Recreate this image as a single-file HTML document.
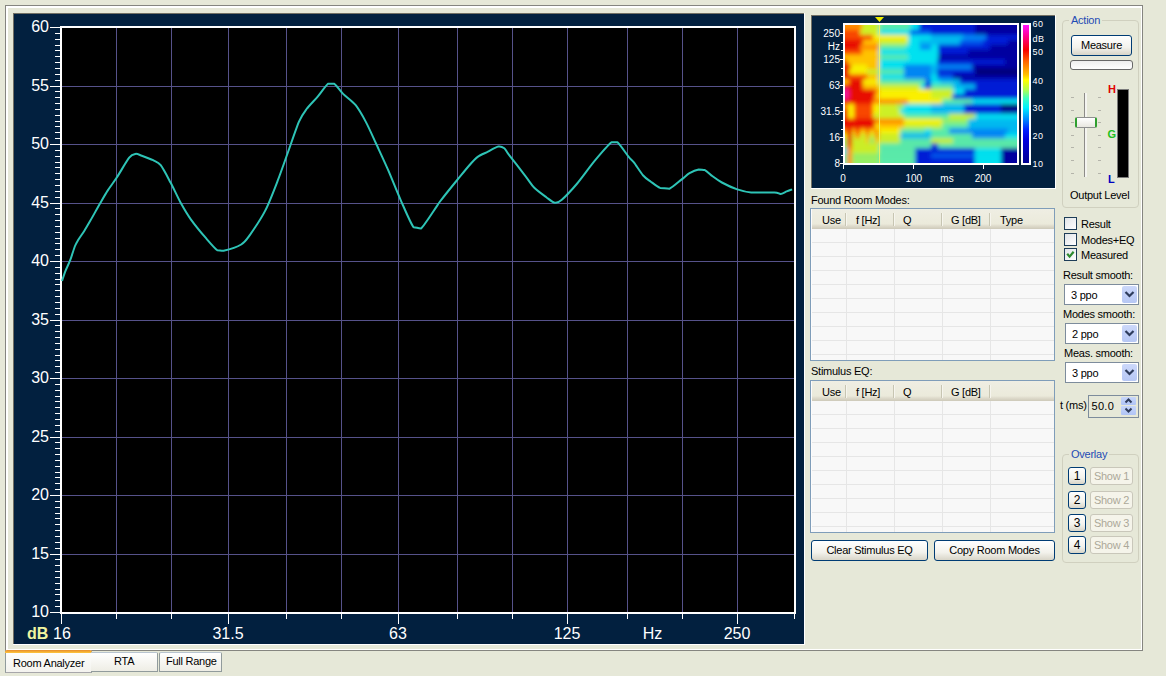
<!DOCTYPE html>
<html><head><meta charset="utf-8"><style>
html,body{margin:0;padding:0;}
body{width:1166px;height:676px;background:#E6E8D8;position:relative;overflow:hidden;font-family:"Liberation Sans", sans-serif;}
.t{position:absolute;white-space:nowrap;font-family:"Liberation Sans", sans-serif;line-height:1;letter-spacing:-0.25px;}
</style></head><body>
<div style="position:absolute;left:5px;top:5px;width:1136px;height:644px;border:1px solid #858580;"></div>
<div style="position:absolute;left:6px;top:6px;width:1133px;height:641px;border-left:2px solid #FFFFFF;border-top:2px solid #FFFFFF;border-right:1px solid #FFFFFF;border-bottom:1px solid #FFFFFF;"></div>
<div style="position:absolute;left:5px;top:650px;width:85px;height:22px;background:linear-gradient(#FFFFFF,#F4F3EE);border-left:1px solid #919B9C;border-right:1px solid #919B9C;border-bottom:1px solid #A7A6AA;"></div>
<div style="position:absolute;left:5px;top:650px;width:87px;height:3px;background:linear-gradient(#E68B2C,#FFC73C);border-radius:2px 2px 0 0"></div>
<div style="position:absolute;left:91px;top:652px;width:66px;height:18px;background:linear-gradient(#FFFFFF,#EEEDE5);border:1px solid #919B9C;border-top:1px solid #B8C4D0;border-left:none;border-radius:0 2px 0 0"></div>
<div style="position:absolute;left:159px;top:652px;width:61px;height:18px;background:linear-gradient(#FFFFFF,#EEEDE5);border:1px solid #919B9C;border-top:1px solid #B8C4D0;border-radius:2px 2px 0 0"></div>
<div class="t" style="left:13px;top:658px;font-size:11px">Room Analyzer</div>
<div class="t" style="left:114px;top:656px;font-size:11px">RTA</div>
<div class="t" style="left:166px;top:656px;font-size:11px">Full Range</div>
<svg width="1166" height="676" style="position:absolute;left:0;top:0" shape-rendering="crispEdges">
<rect x="13" y="13" width="791" height="631" fill="#02203F"/>
<rect x="13" y="13" width="791" height="1" fill="#716F64"/><rect x="13" y="13" width="1" height="631" fill="#716F64"/><rect x="804" y="13" width="1" height="632" fill="#FFFFFF"/><rect x="13" y="644" width="792" height="1" fill="#FFFFFF"/>
<rect x="60" y="26" width="736" height="588" fill="#000"/>
<rect x="62" y="86" width="732" height="1" fill="#56528A"/>
<rect x="62" y="144" width="732" height="1" fill="#56528A"/>
<rect x="62" y="203" width="732" height="1" fill="#56528A"/>
<rect x="62" y="261" width="732" height="1" fill="#56528A"/>
<rect x="62" y="320" width="732" height="1" fill="#56528A"/>
<rect x="62" y="378" width="732" height="1" fill="#56528A"/>
<rect x="62" y="437" width="732" height="1" fill="#56528A"/>
<rect x="62" y="495" width="732" height="1" fill="#56528A"/>
<rect x="62" y="554" width="732" height="1" fill="#56528A"/>
<rect x="116" y="28" width="1" height="584" fill="#56528A"/>
<rect x="171" y="28" width="1" height="584" fill="#56528A"/>
<rect x="228" y="28" width="1" height="584" fill="#56528A"/>
<rect x="286" y="28" width="1" height="584" fill="#56528A"/>
<rect x="341" y="28" width="1" height="584" fill="#56528A"/>
<rect x="398" y="28" width="1" height="584" fill="#56528A"/>
<rect x="457" y="28" width="1" height="584" fill="#56528A"/>
<rect x="512" y="28" width="1" height="584" fill="#56528A"/>
<rect x="567" y="28" width="1" height="584" fill="#56528A"/>
<rect x="627" y="28" width="1" height="584" fill="#56528A"/>
<rect x="682" y="28" width="1" height="584" fill="#56528A"/>
<rect x="737" y="28" width="1" height="584" fill="#56528A"/>
<rect x="60" y="26" width="736" height="2" fill="#fff"/>
<rect x="60" y="612" width="736" height="2" fill="#fff"/>
<rect x="60" y="26" width="2" height="588" fill="#fff"/>
<rect x="794" y="26" width="2" height="588" fill="#fff"/>
<rect x="50" y="27" width="10" height="1" fill="#fff"/>
<rect x="55" y="33" width="5" height="1" fill="#fff"/>
<rect x="55" y="39" width="5" height="1" fill="#fff"/>
<rect x="55" y="45" width="5" height="1" fill="#fff"/>
<rect x="55" y="50" width="5" height="1" fill="#fff"/>
<rect x="55" y="56" width="5" height="1" fill="#fff"/>
<rect x="55" y="62" width="5" height="1" fill="#fff"/>
<rect x="55" y="68" width="5" height="1" fill="#fff"/>
<rect x="55" y="74" width="5" height="1" fill="#fff"/>
<rect x="55" y="80" width="5" height="1" fill="#fff"/>
<rect x="50" y="86" width="10" height="1" fill="#fff"/>
<rect x="55" y="91" width="5" height="1" fill="#fff"/>
<rect x="55" y="97" width="5" height="1" fill="#fff"/>
<rect x="55" y="103" width="5" height="1" fill="#fff"/>
<rect x="55" y="109" width="5" height="1" fill="#fff"/>
<rect x="55" y="115" width="5" height="1" fill="#fff"/>
<rect x="55" y="121" width="5" height="1" fill="#fff"/>
<rect x="55" y="126" width="5" height="1" fill="#fff"/>
<rect x="55" y="132" width="5" height="1" fill="#fff"/>
<rect x="55" y="138" width="5" height="1" fill="#fff"/>
<rect x="50" y="144" width="10" height="1" fill="#fff"/>
<rect x="55" y="150" width="5" height="1" fill="#fff"/>
<rect x="55" y="156" width="5" height="1" fill="#fff"/>
<rect x="55" y="162" width="5" height="1" fill="#fff"/>
<rect x="55" y="167" width="5" height="1" fill="#fff"/>
<rect x="55" y="173" width="5" height="1" fill="#fff"/>
<rect x="55" y="179" width="5" height="1" fill="#fff"/>
<rect x="55" y="185" width="5" height="1" fill="#fff"/>
<rect x="55" y="191" width="5" height="1" fill="#fff"/>
<rect x="55" y="197" width="5" height="1" fill="#fff"/>
<rect x="50" y="203" width="10" height="1" fill="#fff"/>
<rect x="55" y="208" width="5" height="1" fill="#fff"/>
<rect x="55" y="214" width="5" height="1" fill="#fff"/>
<rect x="55" y="220" width="5" height="1" fill="#fff"/>
<rect x="55" y="226" width="5" height="1" fill="#fff"/>
<rect x="55" y="232" width="5" height="1" fill="#fff"/>
<rect x="55" y="238" width="5" height="1" fill="#fff"/>
<rect x="55" y="243" width="5" height="1" fill="#fff"/>
<rect x="55" y="249" width="5" height="1" fill="#fff"/>
<rect x="55" y="255" width="5" height="1" fill="#fff"/>
<rect x="50" y="261" width="10" height="1" fill="#fff"/>
<rect x="55" y="267" width="5" height="1" fill="#fff"/>
<rect x="55" y="273" width="5" height="1" fill="#fff"/>
<rect x="55" y="279" width="5" height="1" fill="#fff"/>
<rect x="55" y="284" width="5" height="1" fill="#fff"/>
<rect x="55" y="290" width="5" height="1" fill="#fff"/>
<rect x="55" y="296" width="5" height="1" fill="#fff"/>
<rect x="55" y="302" width="5" height="1" fill="#fff"/>
<rect x="55" y="308" width="5" height="1" fill="#fff"/>
<rect x="55" y="314" width="5" height="1" fill="#fff"/>
<rect x="50" y="320" width="10" height="1" fill="#fff"/>
<rect x="55" y="325" width="5" height="1" fill="#fff"/>
<rect x="55" y="331" width="5" height="1" fill="#fff"/>
<rect x="55" y="337" width="5" height="1" fill="#fff"/>
<rect x="55" y="343" width="5" height="1" fill="#fff"/>
<rect x="55" y="349" width="5" height="1" fill="#fff"/>
<rect x="55" y="355" width="5" height="1" fill="#fff"/>
<rect x="55" y="360" width="5" height="1" fill="#fff"/>
<rect x="55" y="366" width="5" height="1" fill="#fff"/>
<rect x="55" y="372" width="5" height="1" fill="#fff"/>
<rect x="50" y="378" width="10" height="1" fill="#fff"/>
<rect x="55" y="384" width="5" height="1" fill="#fff"/>
<rect x="55" y="390" width="5" height="1" fill="#fff"/>
<rect x="55" y="396" width="5" height="1" fill="#fff"/>
<rect x="55" y="401" width="5" height="1" fill="#fff"/>
<rect x="55" y="407" width="5" height="1" fill="#fff"/>
<rect x="55" y="413" width="5" height="1" fill="#fff"/>
<rect x="55" y="419" width="5" height="1" fill="#fff"/>
<rect x="55" y="425" width="5" height="1" fill="#fff"/>
<rect x="55" y="431" width="5" height="1" fill="#fff"/>
<rect x="50" y="437" width="10" height="1" fill="#fff"/>
<rect x="55" y="442" width="5" height="1" fill="#fff"/>
<rect x="55" y="448" width="5" height="1" fill="#fff"/>
<rect x="55" y="454" width="5" height="1" fill="#fff"/>
<rect x="55" y="460" width="5" height="1" fill="#fff"/>
<rect x="55" y="466" width="5" height="1" fill="#fff"/>
<rect x="55" y="472" width="5" height="1" fill="#fff"/>
<rect x="55" y="477" width="5" height="1" fill="#fff"/>
<rect x="55" y="483" width="5" height="1" fill="#fff"/>
<rect x="55" y="489" width="5" height="1" fill="#fff"/>
<rect x="50" y="495" width="10" height="1" fill="#fff"/>
<rect x="55" y="501" width="5" height="1" fill="#fff"/>
<rect x="55" y="507" width="5" height="1" fill="#fff"/>
<rect x="55" y="513" width="5" height="1" fill="#fff"/>
<rect x="55" y="518" width="5" height="1" fill="#fff"/>
<rect x="55" y="524" width="5" height="1" fill="#fff"/>
<rect x="55" y="530" width="5" height="1" fill="#fff"/>
<rect x="55" y="536" width="5" height="1" fill="#fff"/>
<rect x="55" y="542" width="5" height="1" fill="#fff"/>
<rect x="55" y="548" width="5" height="1" fill="#fff"/>
<rect x="50" y="554" width="10" height="1" fill="#fff"/>
<rect x="55" y="559" width="5" height="1" fill="#fff"/>
<rect x="55" y="565" width="5" height="1" fill="#fff"/>
<rect x="55" y="571" width="5" height="1" fill="#fff"/>
<rect x="55" y="577" width="5" height="1" fill="#fff"/>
<rect x="55" y="583" width="5" height="1" fill="#fff"/>
<rect x="55" y="589" width="5" height="1" fill="#fff"/>
<rect x="55" y="594" width="5" height="1" fill="#fff"/>
<rect x="55" y="600" width="5" height="1" fill="#fff"/>
<rect x="55" y="606" width="5" height="1" fill="#fff"/>
<rect x="50" y="612" width="10" height="1" fill="#fff"/>
<rect x="61" y="614" width="1" height="10" fill="#fff"/>
<rect x="116" y="614" width="1" height="5" fill="#fff"/>
<rect x="171" y="614" width="1" height="5" fill="#fff"/>
<rect x="228" y="614" width="1" height="10" fill="#fff"/>
<rect x="286" y="614" width="1" height="5" fill="#fff"/>
<rect x="341" y="614" width="1" height="5" fill="#fff"/>
<rect x="398" y="614" width="1" height="10" fill="#fff"/>
<rect x="457" y="614" width="1" height="5" fill="#fff"/>
<rect x="512" y="614" width="1" height="5" fill="#fff"/>
<rect x="567" y="614" width="1" height="10" fill="#fff"/>
<rect x="627" y="614" width="1" height="5" fill="#fff"/>
<rect x="682" y="614" width="1" height="5" fill="#fff"/>
<rect x="737" y="614" width="1" height="10" fill="#fff"/>
<rect x="794" y="614" width="1" height="5" fill="#fff"/>
</svg>
<svg width="1166" height="676" style="position:absolute;left:0;top:0">
<g font-family='"Liberation Sans", sans-serif' font-size="16" fill="#fff">
<text x="49" y="32.4" text-anchor="end">60</text>
<text x="49" y="91.4" text-anchor="end">55</text>
<text x="49" y="149.4" text-anchor="end">50</text>
<text x="49" y="208.4" text-anchor="end">45</text>
<text x="49" y="266.4" text-anchor="end">40</text>
<text x="49" y="325.4" text-anchor="end">35</text>
<text x="49" y="383.4" text-anchor="end">30</text>
<text x="49" y="442.4" text-anchor="end">25</text>
<text x="49" y="500.4" text-anchor="end">20</text>
<text x="49" y="559.4" text-anchor="end">15</text>
<text x="49" y="617.4" text-anchor="end">10</text>
<text x="53" y="639" text-anchor="start">16</text>
<text x="228" y="639" text-anchor="middle">31.5</text>
<text x="398" y="639" text-anchor="middle">63</text>
<text x="567" y="639" text-anchor="middle">125</text>
<text x="652.5" y="639" text-anchor="middle">Hz</text>
<text x="737" y="639" text-anchor="middle">250</text>
</g>
<text x="27" y="639" font-family='"Liberation Sans", sans-serif' font-size="16" font-weight="bold" fill="#F0F4A0">dB</text>
<path d="M62,281 C62.5,279.6 64.3,273.9 65.5,270.9 C66.7,267.9 68.8,263.8 70.2,260.2 C71.6,256.6 73.8,249.0 75,246 C76.2,243.0 77.2,241.7 78.5,239.5 C79.8,237.3 82.7,233.4 84.4,230.7 C86.1,228.0 88.1,224.6 90.4,220.6 C92.7,216.6 97.8,207.3 100.3,203 C102.8,198.7 105.5,194.0 107.8,190.4 C110.1,186.8 113.5,182.5 116.6,177.8 C119.7,173.1 126.5,161.1 129.2,157.7 C131.9,154.3 133.7,154.2 135.5,153.9 C137.3,153.6 139.3,154.8 141.8,155.7 C144.3,156.6 150.4,158.8 153.1,160.2 C155.8,161.6 158.2,162.0 160.7,165.2 C163.2,168.4 167.8,177.4 170.7,182.8 C173.6,188.2 177.9,197.8 180.8,203 C183.7,208.2 187.2,214.3 190.8,219.3 C194.4,224.3 202.2,233.8 206,238.2 C209.8,242.6 214.8,248.5 217.3,250.3 C219.8,250.3 220.2,250.8 223.6,250.8 C227.0,250.0 237.4,246.8 241.2,244.5 C245.0,242.2 246.6,239.6 250,234.8 C253.4,230.0 261.1,218.6 265.1,210.9 C269.1,203.2 274.5,189.0 277.7,180.7 C280.9,172.4 284.7,161.4 287.7,153 C290.7,144.6 296.3,127.9 299,121.6 C301.7,115.3 303.9,112.6 306.6,109 C309.3,105.4 314.8,100.0 317.9,96.4 C321.0,92.8 325.7,85.6 328,83.8 C330.3,83.8 332.1,83.8 334.3,83.8 C336.5,85.2 340.0,90.8 343.1,93.9 C346.2,97.0 352.5,101.2 355.7,105.2 C358.9,109.2 362.8,116.2 365.7,121.6 C368.6,127.0 372.6,136.0 375.8,143 C379.0,150.0 384.8,162.3 388.4,170.6 C392.0,178.9 397.4,192.7 401,200.8 C404.6,208.9 410.6,223.2 413.5,227.2 C416.4,227.2 417.8,228.5 421,228.5 C424.2,225.6 433.5,211.0 436.2,207.1 C438.9,203.2 437.0,205.4 440,201.5 C443.0,197.6 453.0,185.1 457.2,180 C461.4,174.9 466.3,168.8 469.2,165.5 C472.1,162.2 475.0,158.9 477.7,156.9 C480.4,154.9 485.1,153.2 488,151.7 C490.9,150.2 496.0,147.1 498.3,146.6 C500.6,146.1 502.8,147.2 504.3,148.3 C505.8,149.4 505.5,150.3 508.6,154.3 C511.7,158.3 522.1,171.8 525.8,176.6 C529.5,181.4 531.4,184.9 534.3,187.8 C537.2,190.7 543.4,195.1 546.3,197.2 C549.2,199.3 552.7,202.4 554.9,202.8 C557.1,203.2 558.6,202.6 561.8,199.8 C565.0,197.0 572.5,189.0 577.2,183.5 C581.9,178.0 589.5,167.1 594.4,161.2 C599.3,155.3 608.2,145.0 611.5,142.3 C614.8,142.3 615.0,142.3 617.5,142.3 C620.0,144.4 626.4,154.0 628.7,156.9 C631.0,159.8 631.8,159.7 633.9,162.4 C636.0,165.1 640.8,172.7 643.2,175.5 C645.6,178.3 648.5,179.9 650.9,181.7 C653.3,183.5 657.5,186.9 660.1,187.9 C662.7,187.9 666.3,188.7 669.4,188.7 C672.5,187.5 678.8,181.6 681.7,179.4 C684.6,177.2 687.1,174.6 689.5,173.2 C691.9,171.8 696.5,169.8 698.7,169.4 C700.9,169.4 702.9,170.1 704.9,170.1 C706.9,171.1 710.2,174.5 712.6,176.3 C715.0,178.1 718.4,180.6 721.9,182.5 C725.4,184.4 733.1,188.0 737.3,189.4 C741.5,190.8 745.9,192.1 751.2,192.5 C756.5,192.5 770.2,192.5 774.4,192.5 C778.6,192.5 778.7,194.0 780.5,194 C782.3,193.8 785.0,192.1 786.7,191.4 C788.4,190.7 791.3,189.7 792.1,189.4" fill="none" stroke="#2EC4B6" stroke-width="2" stroke-linejoin="round"/>
</svg>
<svg width="1166" height="676" style="position:absolute;left:0;top:0" shape-rendering="crispEdges">
<rect x="811" y="15" width="244" height="173" fill="#02203F"/>
<rect x="811" y="15" width="244" height="1" fill="#716F64"/><rect x="811" y="15" width="1" height="173" fill="#716F64"/><rect x="1055" y="15" width="1" height="174" fill="#FFFFFF"/><rect x="811" y="188" width="245" height="1" fill="#FFFFFF"/>
</svg>
<svg width="1166" height="676" style="position:absolute;left:0;top:0">
<defs><filter id="bl" filterUnits="userSpaceOnUse" x="800" y="0" width="260" height="200"><feGaussianBlur stdDeviation="2.3"/></filter>
<clipPath id="cp"><rect x="845" y="25" width="172" height="138"/></clipPath></defs>
<g clip-path="url(#cp)"><g filter="url(#bl)">
<rect x="839.0" y="20.07" width="23.5" height="5.43" fill="rgb(255, 140, 0)"/>
<rect x="862.0" y="20.07" width="17.5" height="5.43" fill="rgb(205, 240, 40)"/>
<rect x="879.0" y="20.07" width="31.5" height="5.43" fill="rgb(90, 235, 170)"/>
<rect x="910.0" y="20.07" width="9.5" height="5.43" fill="rgb(0, 225, 240)"/>
<rect x="919.0" y="20.07" width="56.5" height="5.43" fill="rgb(0, 30, 215)"/>
<rect x="975.0" y="20.07" width="50.5" height="5.43" fill="rgb(0, 0, 160)"/>
<rect x="839.0" y="25.00" width="23.5" height="5.43" fill="rgb(255, 140, 0)"/>
<rect x="862.0" y="25.00" width="17.5" height="5.43" fill="rgb(205, 240, 40)"/>
<rect x="879.0" y="25.00" width="31.5" height="5.43" fill="rgb(90, 235, 170)"/>
<rect x="910.0" y="25.00" width="9.5" height="5.43" fill="rgb(0, 225, 240)"/>
<rect x="919.0" y="25.00" width="56.5" height="5.43" fill="rgb(0, 30, 215)"/>
<rect x="975.0" y="25.00" width="50.5" height="5.43" fill="rgb(0, 0, 160)"/>
<rect x="839.0" y="29.93" width="21.5" height="5.43" fill="rgb(248, 70, 0)"/>
<rect x="860.0" y="29.93" width="19.5" height="5.43" fill="rgb(205, 240, 40)"/>
<rect x="879.0" y="29.93" width="31.5" height="5.43" fill="rgb(0, 225, 240)"/>
<rect x="910.0" y="29.93" width="21.5" height="5.43" fill="rgb(0, 85, 235)"/>
<rect x="931.0" y="29.93" width="44.5" height="5.43" fill="rgb(0, 30, 215)"/>
<rect x="975.0" y="29.93" width="50.5" height="5.43" fill="rgb(0, 0, 160)"/>
<rect x="839.0" y="34.86" width="34.5" height="5.43" fill="rgb(248, 70, 0)"/>
<rect x="873.0" y="34.86" width="6.5" height="5.43" fill="rgb(250, 240, 0)"/>
<rect x="879.0" y="34.86" width="29.5" height="5.43" fill="rgb(250, 240, 0)"/>
<rect x="908.0" y="34.86" width="23.5" height="5.43" fill="rgb(0, 225, 240)"/>
<rect x="931.0" y="34.86" width="32.5" height="5.43" fill="rgb(0, 185, 240)"/>
<rect x="963.0" y="34.86" width="23.5" height="5.43" fill="rgb(0, 135, 245)"/>
<rect x="986.0" y="34.86" width="39.5" height="5.43" fill="rgb(0, 30, 215)"/>
<rect x="839.0" y="39.79" width="24.5" height="5.43" fill="rgb(232, 8, 0)"/>
<rect x="863.0" y="39.79" width="16.5" height="5.43" fill="rgb(255, 195, 0)"/>
<rect x="879.0" y="39.79" width="29.5" height="5.43" fill="rgb(205, 240, 40)"/>
<rect x="908.0" y="39.79" width="11.5" height="5.43" fill="rgb(0, 225, 240)"/>
<rect x="919.0" y="39.79" width="12.5" height="5.43" fill="rgb(0, 185, 240)"/>
<rect x="931.0" y="39.79" width="29.5" height="5.43" fill="rgb(0, 185, 240)"/>
<rect x="960.0" y="39.79" width="23.5" height="5.43" fill="rgb(0, 85, 235)"/>
<rect x="983.0" y="39.79" width="25.5" height="5.43" fill="rgb(0, 30, 215)"/>
<rect x="1008.0" y="39.79" width="17.5" height="5.43" fill="rgb(0, 0, 160)"/>
<rect x="839.0" y="44.71" width="21.5" height="5.43" fill="rgb(232, 8, 0)"/>
<rect x="860.0" y="44.71" width="19.5" height="5.43" fill="rgb(255, 140, 0)"/>
<rect x="879.0" y="44.71" width="27.5" height="5.43" fill="rgb(90, 235, 170)"/>
<rect x="906.0" y="44.71" width="14.5" height="5.43" fill="rgb(0, 225, 240)"/>
<rect x="920.0" y="44.71" width="11.5" height="5.43" fill="rgb(0, 135, 245)"/>
<rect x="931.0" y="44.71" width="7.5" height="5.43" fill="rgb(0, 225, 240)"/>
<rect x="938.0" y="44.71" width="52.5" height="5.43" fill="rgb(0, 30, 215)"/>
<rect x="990.0" y="44.71" width="35.5" height="5.43" fill="rgb(0, 0, 160)"/>
<rect x="839.0" y="49.64" width="23.5" height="5.43" fill="rgb(248, 70, 0)"/>
<rect x="862.0" y="49.64" width="17.5" height="5.43" fill="rgb(255, 195, 0)"/>
<rect x="879.0" y="49.64" width="24.5" height="5.43" fill="rgb(0, 225, 240)"/>
<rect x="903.0" y="49.64" width="35.5" height="5.43" fill="rgb(0, 225, 240)"/>
<rect x="938.0" y="49.64" width="30.5" height="5.43" fill="rgb(0, 30, 215)"/>
<rect x="968.0" y="49.64" width="57.5" height="5.43" fill="rgb(0, 0, 160)"/>
<rect x="839.0" y="54.57" width="40.5" height="5.43" fill="rgb(255, 195, 0)"/>
<rect x="879.0" y="54.57" width="29.5" height="5.43" fill="rgb(90, 235, 170)"/>
<rect x="908.0" y="54.57" width="23.5" height="5.43" fill="rgb(0, 225, 240)"/>
<rect x="931.0" y="54.57" width="7.5" height="5.43" fill="rgb(0, 225, 240)"/>
<rect x="938.0" y="54.57" width="87.5" height="5.43" fill="rgb(0, 0, 160)"/>
<rect x="839.0" y="59.50" width="8.5" height="5.43" fill="rgb(232, 8, 0)"/>
<rect x="847.0" y="59.50" width="32.5" height="5.43" fill="rgb(255, 195, 0)"/>
<rect x="879.0" y="59.50" width="52.5" height="5.43" fill="rgb(0, 225, 240)"/>
<rect x="931.0" y="59.50" width="6.5" height="5.43" fill="rgb(0, 225, 240)"/>
<rect x="937.0" y="59.50" width="68.5" height="5.43" fill="rgb(0, 30, 215)"/>
<rect x="1005.0" y="59.50" width="20.5" height="5.43" fill="rgb(0, 0, 160)"/>
<rect x="839.0" y="64.43" width="12.5" height="5.43" fill="rgb(232, 8, 0)"/>
<rect x="851.0" y="64.43" width="16.5" height="5.43" fill="rgb(250, 240, 0)"/>
<rect x="867.0" y="64.43" width="12.5" height="5.43" fill="rgb(255, 195, 0)"/>
<rect x="879.0" y="64.43" width="25.5" height="5.43" fill="rgb(0, 225, 240)"/>
<rect x="904.0" y="64.43" width="27.5" height="5.43" fill="rgb(0, 135, 245)"/>
<rect x="931.0" y="64.43" width="6.5" height="5.43" fill="rgb(0, 185, 240)"/>
<rect x="937.0" y="64.43" width="35.5" height="5.43" fill="rgb(0, 135, 245)"/>
<rect x="972.0" y="64.43" width="53.5" height="5.43" fill="rgb(0, 0, 160)"/>
<rect x="839.0" y="69.36" width="10.5" height="5.43" fill="rgb(232, 8, 0)"/>
<rect x="849.0" y="69.36" width="18.5" height="5.43" fill="rgb(250, 240, 0)"/>
<rect x="867.0" y="69.36" width="12.5" height="5.43" fill="rgb(205, 240, 40)"/>
<rect x="879.0" y="69.36" width="25.5" height="5.43" fill="rgb(90, 235, 170)"/>
<rect x="904.0" y="69.36" width="27.5" height="5.43" fill="rgb(0, 135, 245)"/>
<rect x="931.0" y="69.36" width="6.5" height="5.43" fill="rgb(0, 185, 240)"/>
<rect x="937.0" y="69.36" width="38.5" height="5.43" fill="rgb(0, 30, 215)"/>
<rect x="975.0" y="69.36" width="50.5" height="5.43" fill="rgb(0, 0, 115)"/>
<rect x="839.0" y="74.29" width="10.5" height="5.43" fill="rgb(232, 8, 0)"/>
<rect x="849.0" y="74.29" width="18.5" height="5.43" fill="rgb(248, 70, 0)"/>
<rect x="867.0" y="74.29" width="12.5" height="5.43" fill="rgb(255, 195, 0)"/>
<rect x="879.0" y="74.29" width="25.5" height="5.43" fill="rgb(0, 225, 240)"/>
<rect x="904.0" y="74.29" width="27.5" height="5.43" fill="rgb(0, 135, 245)"/>
<rect x="931.0" y="74.29" width="6.5" height="5.43" fill="rgb(0, 225, 240)"/>
<rect x="937.0" y="74.29" width="16.5" height="5.43" fill="rgb(0, 85, 235)"/>
<rect x="953.0" y="74.29" width="72.5" height="5.43" fill="rgb(0, 0, 160)"/>
<rect x="839.0" y="79.21" width="10.5" height="5.43" fill="rgb(255, 195, 0)"/>
<rect x="849.0" y="79.21" width="14.5" height="5.43" fill="rgb(232, 8, 0)"/>
<rect x="863.0" y="79.21" width="16.5" height="5.43" fill="rgb(250, 240, 0)"/>
<rect x="879.0" y="79.21" width="46.5" height="5.43" fill="rgb(90, 235, 170)"/>
<rect x="925.0" y="79.21" width="6.5" height="5.43" fill="rgb(0, 85, 235)"/>
<rect x="931.0" y="79.21" width="9.5" height="5.43" fill="rgb(0, 225, 240)"/>
<rect x="940.0" y="79.21" width="20.5" height="5.43" fill="rgb(0, 185, 240)"/>
<rect x="960.0" y="79.21" width="65.5" height="5.43" fill="rgb(0, 30, 215)"/>
<rect x="839.0" y="84.14" width="24.5" height="5.43" fill="rgb(232, 8, 0)"/>
<rect x="863.0" y="84.14" width="16.5" height="5.43" fill="rgb(255, 195, 0)"/>
<rect x="879.0" y="84.14" width="41.5" height="5.43" fill="rgb(205, 240, 40)"/>
<rect x="920.0" y="84.14" width="5.5" height="5.43" fill="rgb(0, 225, 240)"/>
<rect x="925.0" y="84.14" width="6.5" height="5.43" fill="rgb(0, 30, 215)"/>
<rect x="931.0" y="84.14" width="22.5" height="5.43" fill="rgb(90, 235, 170)"/>
<rect x="953.0" y="84.14" width="22.5" height="5.43" fill="rgb(0, 185, 240)"/>
<rect x="975.0" y="84.14" width="50.5" height="5.43" fill="rgb(0, 30, 215)"/>
<rect x="839.0" y="89.07" width="10.5" height="5.43" fill="rgb(240, 20, 150)"/>
<rect x="849.0" y="89.07" width="26.5" height="5.43" fill="rgb(232, 8, 0)"/>
<rect x="875.0" y="89.07" width="4.5" height="5.43" fill="rgb(255, 140, 0)"/>
<rect x="879.0" y="89.07" width="52.5" height="5.43" fill="rgb(250, 240, 0)"/>
<rect x="931.0" y="89.07" width="22.5" height="5.43" fill="rgb(205, 240, 40)"/>
<rect x="953.0" y="89.07" width="11.5" height="5.43" fill="rgb(0, 225, 240)"/>
<rect x="964.0" y="89.07" width="61.5" height="5.43" fill="rgb(0, 30, 215)"/>
<rect x="839.0" y="94.00" width="10.5" height="5.43" fill="rgb(240, 20, 150)"/>
<rect x="849.0" y="94.00" width="26.5" height="5.43" fill="rgb(232, 8, 0)"/>
<rect x="875.0" y="94.00" width="4.5" height="5.43" fill="rgb(255, 195, 0)"/>
<rect x="879.0" y="94.00" width="52.5" height="5.43" fill="rgb(250, 240, 0)"/>
<rect x="931.0" y="94.00" width="21.5" height="5.43" fill="rgb(205, 240, 40)"/>
<rect x="952.0" y="94.00" width="73.5" height="5.43" fill="rgb(0, 30, 215)"/>
<rect x="839.0" y="98.93" width="34.5" height="5.43" fill="rgb(232, 8, 0)"/>
<rect x="873.0" y="98.93" width="6.5" height="5.43" fill="rgb(255, 140, 0)"/>
<rect x="879.0" y="98.93" width="29.5" height="5.43" fill="rgb(255, 140, 0)"/>
<rect x="908.0" y="98.93" width="34.5" height="5.43" fill="rgb(250, 240, 0)"/>
<rect x="942.0" y="98.93" width="30.5" height="5.43" fill="rgb(90, 235, 170)"/>
<rect x="972.0" y="98.93" width="53.5" height="5.43" fill="rgb(0, 225, 240)"/>
<rect x="839.0" y="103.86" width="9.5" height="5.43" fill="rgb(255, 140, 0)"/>
<rect x="848.0" y="103.86" width="6.5" height="5.43" fill="rgb(250, 240, 0)"/>
<rect x="854.0" y="103.86" width="19.5" height="5.43" fill="rgb(248, 70, 0)"/>
<rect x="873.0" y="103.86" width="6.5" height="5.43" fill="rgb(250, 240, 0)"/>
<rect x="879.0" y="103.86" width="18.5" height="5.43" fill="rgb(205, 240, 40)"/>
<rect x="897.0" y="103.86" width="7.5" height="5.43" fill="rgb(150, 240, 100)"/>
<rect x="904.0" y="103.86" width="27.5" height="5.43" fill="rgb(0, 225, 240)"/>
<rect x="931.0" y="103.86" width="33.5" height="5.43" fill="rgb(0, 185, 240)"/>
<rect x="964.0" y="103.86" width="37.5" height="5.43" fill="rgb(0, 30, 215)"/>
<rect x="1001.0" y="103.86" width="24.5" height="5.43" fill="rgb(0, 0, 115)"/>
<rect x="839.0" y="108.79" width="9.5" height="5.43" fill="rgb(232, 8, 0)"/>
<rect x="848.0" y="108.79" width="6.5" height="5.43" fill="rgb(250, 240, 0)"/>
<rect x="854.0" y="108.79" width="19.5" height="5.43" fill="rgb(248, 70, 0)"/>
<rect x="873.0" y="108.79" width="6.5" height="5.43" fill="rgb(250, 240, 0)"/>
<rect x="879.0" y="108.79" width="21.5" height="5.43" fill="rgb(205, 240, 40)"/>
<rect x="900.0" y="108.79" width="31.5" height="5.43" fill="rgb(0, 225, 240)"/>
<rect x="931.0" y="108.79" width="33.5" height="5.43" fill="rgb(0, 185, 240)"/>
<rect x="964.0" y="108.79" width="37.5" height="5.43" fill="rgb(0, 30, 215)"/>
<rect x="1001.0" y="108.79" width="24.5" height="5.43" fill="rgb(0, 0, 160)"/>
<rect x="839.0" y="113.71" width="9.5" height="5.43" fill="rgb(232, 8, 0)"/>
<rect x="848.0" y="113.71" width="6.5" height="5.43" fill="rgb(250, 240, 0)"/>
<rect x="854.0" y="113.71" width="19.5" height="5.43" fill="rgb(248, 70, 0)"/>
<rect x="873.0" y="113.71" width="31.5" height="5.43" fill="rgb(205, 240, 40)"/>
<rect x="904.0" y="113.71" width="45.5" height="5.43" fill="rgb(90, 235, 170)"/>
<rect x="949.0" y="113.71" width="26.5" height="5.43" fill="rgb(205, 240, 40)"/>
<rect x="975.0" y="113.71" width="50.5" height="5.43" fill="rgb(0, 225, 240)"/>
<rect x="839.0" y="118.64" width="36.5" height="5.43" fill="rgb(232, 8, 0)"/>
<rect x="875.0" y="118.64" width="4.5" height="5.43" fill="rgb(255, 140, 0)"/>
<rect x="879.0" y="118.64" width="25.5" height="5.43" fill="rgb(255, 140, 0)"/>
<rect x="904.0" y="118.64" width="38.5" height="5.43" fill="rgb(250, 240, 0)"/>
<rect x="942.0" y="118.64" width="26.5" height="5.43" fill="rgb(150, 240, 100)"/>
<rect x="968.0" y="118.64" width="57.5" height="5.43" fill="rgb(0, 185, 240)"/>
<rect x="839.0" y="123.57" width="36.5" height="5.43" fill="rgb(232, 8, 0)"/>
<rect x="875.0" y="123.57" width="4.5" height="5.43" fill="rgb(250, 240, 0)"/>
<rect x="879.0" y="123.57" width="25.5" height="5.43" fill="rgb(255, 195, 0)"/>
<rect x="904.0" y="123.57" width="38.5" height="5.43" fill="rgb(205, 240, 40)"/>
<rect x="942.0" y="123.57" width="26.5" height="5.43" fill="rgb(90, 235, 170)"/>
<rect x="968.0" y="123.57" width="57.5" height="5.43" fill="rgb(0, 185, 240)"/>
<rect x="839.0" y="128.50" width="8.5" height="5.43" fill="rgb(255, 140, 0)"/>
<rect x="847.0" y="128.50" width="5.5" height="5.43" fill="rgb(232, 8, 0)"/>
<rect x="852.0" y="128.50" width="3.5" height="5.43" fill="rgb(255, 195, 0)"/>
<rect x="855.0" y="128.50" width="5.5" height="5.43" fill="rgb(248, 70, 0)"/>
<rect x="860.0" y="128.50" width="6.5" height="5.43" fill="rgb(255, 195, 0)"/>
<rect x="866.0" y="128.50" width="3.5" height="5.43" fill="rgb(248, 70, 0)"/>
<rect x="869.0" y="128.50" width="6.5" height="5.43" fill="rgb(255, 195, 0)"/>
<rect x="875.0" y="128.50" width="4.5" height="5.43" fill="rgb(255, 140, 0)"/>
<rect x="879.0" y="128.50" width="21.5" height="5.43" fill="rgb(250, 240, 0)"/>
<rect x="900.0" y="128.50" width="25.5" height="5.43" fill="rgb(90, 235, 170)"/>
<rect x="925.0" y="128.50" width="6.5" height="5.43" fill="rgb(0, 225, 240)"/>
<rect x="931.0" y="128.50" width="18.5" height="5.43" fill="rgb(90, 235, 170)"/>
<rect x="949.0" y="128.50" width="59.5" height="5.43" fill="rgb(0, 135, 245)"/>
<rect x="1008.0" y="128.50" width="17.5" height="5.43" fill="rgb(0, 185, 240)"/>
<rect x="839.0" y="133.43" width="8.5" height="5.43" fill="rgb(250, 240, 0)"/>
<rect x="847.0" y="133.43" width="5.5" height="5.43" fill="rgb(232, 8, 0)"/>
<rect x="852.0" y="133.43" width="3.5" height="5.43" fill="rgb(205, 240, 40)"/>
<rect x="855.0" y="133.43" width="5.5" height="5.43" fill="rgb(255, 140, 0)"/>
<rect x="860.0" y="133.43" width="6.5" height="5.43" fill="rgb(205, 240, 40)"/>
<rect x="866.0" y="133.43" width="3.5" height="5.43" fill="rgb(255, 140, 0)"/>
<rect x="869.0" y="133.43" width="6.5" height="5.43" fill="rgb(205, 240, 40)"/>
<rect x="875.0" y="133.43" width="4.5" height="5.43" fill="rgb(255, 140, 0)"/>
<rect x="879.0" y="133.43" width="21.5" height="5.43" fill="rgb(205, 240, 40)"/>
<rect x="900.0" y="133.43" width="31.5" height="5.43" fill="rgb(0, 185, 240)"/>
<rect x="931.0" y="133.43" width="41.5" height="5.43" fill="rgb(90, 235, 170)"/>
<rect x="972.0" y="133.43" width="33.5" height="5.43" fill="rgb(0, 135, 245)"/>
<rect x="1005.0" y="133.43" width="20.5" height="5.43" fill="rgb(0, 225, 240)"/>
<rect x="839.0" y="138.36" width="8.5" height="5.43" fill="rgb(150, 240, 100)"/>
<rect x="847.0" y="138.36" width="5.5" height="5.43" fill="rgb(232, 8, 0)"/>
<rect x="852.0" y="138.36" width="14.5" height="5.43" fill="rgb(205, 240, 40)"/>
<rect x="866.0" y="138.36" width="3.5" height="5.43" fill="rgb(255, 195, 0)"/>
<rect x="869.0" y="138.36" width="6.5" height="5.43" fill="rgb(150, 240, 100)"/>
<rect x="875.0" y="138.36" width="4.5" height="5.43" fill="rgb(255, 195, 0)"/>
<rect x="879.0" y="138.36" width="21.5" height="5.43" fill="rgb(205, 240, 40)"/>
<rect x="900.0" y="138.36" width="31.5" height="5.43" fill="rgb(90, 235, 170)"/>
<rect x="931.0" y="138.36" width="22.5" height="5.43" fill="rgb(205, 240, 40)"/>
<rect x="953.0" y="138.36" width="72.5" height="5.43" fill="rgb(90, 235, 170)"/>
<rect x="839.0" y="143.29" width="8.5" height="5.43" fill="rgb(150, 240, 100)"/>
<rect x="847.0" y="143.29" width="5.5" height="5.43" fill="rgb(248, 70, 0)"/>
<rect x="852.0" y="143.29" width="27.5" height="5.43" fill="rgb(205, 240, 40)"/>
<rect x="879.0" y="143.29" width="52.5" height="5.43" fill="rgb(90, 235, 170)"/>
<rect x="931.0" y="143.29" width="7.5" height="5.43" fill="rgb(0, 30, 215)"/>
<rect x="938.0" y="143.29" width="87.5" height="5.43" fill="rgb(90, 235, 170)"/>
<rect x="839.0" y="148.21" width="8.5" height="5.43" fill="rgb(0, 225, 240)"/>
<rect x="847.0" y="148.21" width="5.5" height="5.43" fill="rgb(255, 140, 0)"/>
<rect x="852.0" y="148.21" width="27.5" height="5.43" fill="rgb(205, 240, 40)"/>
<rect x="879.0" y="148.21" width="36.5" height="5.43" fill="rgb(90, 235, 170)"/>
<rect x="915.0" y="148.21" width="16.5" height="5.43" fill="rgb(0, 30, 215)"/>
<rect x="931.0" y="148.21" width="44.5" height="5.43" fill="rgb(0, 30, 215)"/>
<rect x="975.0" y="148.21" width="26.5" height="5.43" fill="rgb(0, 225, 240)"/>
<rect x="1001.0" y="148.21" width="24.5" height="5.43" fill="rgb(0, 0, 160)"/>
<rect x="839.0" y="153.14" width="8.5" height="5.43" fill="rgb(90, 235, 170)"/>
<rect x="847.0" y="153.14" width="5.5" height="5.43" fill="rgb(255, 140, 0)"/>
<rect x="852.0" y="153.14" width="27.5" height="5.43" fill="rgb(150, 240, 100)"/>
<rect x="879.0" y="153.14" width="36.5" height="5.43" fill="rgb(90, 235, 170)"/>
<rect x="915.0" y="153.14" width="16.5" height="5.43" fill="rgb(0, 30, 215)"/>
<rect x="931.0" y="153.14" width="44.5" height="5.43" fill="rgb(0, 85, 235)"/>
<rect x="975.0" y="153.14" width="26.5" height="5.43" fill="rgb(0, 225, 240)"/>
<rect x="1001.0" y="153.14" width="24.5" height="5.43" fill="rgb(0, 0, 160)"/>
<rect x="839.0" y="158.07" width="8.5" height="5.43" fill="rgb(90, 235, 170)"/>
<rect x="847.0" y="158.07" width="5.5" height="5.43" fill="rgb(255, 140, 0)"/>
<rect x="852.0" y="158.07" width="27.5" height="5.43" fill="rgb(150, 240, 100)"/>
<rect x="879.0" y="158.07" width="36.5" height="5.43" fill="rgb(90, 235, 170)"/>
<rect x="915.0" y="158.07" width="16.5" height="5.43" fill="rgb(0, 30, 215)"/>
<rect x="931.0" y="158.07" width="44.5" height="5.43" fill="rgb(0, 30, 215)"/>
<rect x="975.0" y="158.07" width="26.5" height="5.43" fill="rgb(0, 225, 240)"/>
<rect x="1001.0" y="158.07" width="24.5" height="5.43" fill="rgb(0, 0, 160)"/>
<rect x="839.0" y="163.00" width="8.5" height="5.43" fill="rgb(90, 235, 170)"/>
<rect x="847.0" y="163.00" width="5.5" height="5.43" fill="rgb(255, 140, 0)"/>
<rect x="852.0" y="163.00" width="27.5" height="5.43" fill="rgb(150, 240, 100)"/>
<rect x="879.0" y="163.00" width="36.5" height="5.43" fill="rgb(90, 235, 170)"/>
<rect x="915.0" y="163.00" width="16.5" height="5.43" fill="rgb(0, 30, 215)"/>
<rect x="931.0" y="163.00" width="44.5" height="5.43" fill="rgb(0, 30, 215)"/>
<rect x="975.0" y="163.00" width="26.5" height="5.43" fill="rgb(0, 225, 240)"/>
<rect x="1001.0" y="163.00" width="24.5" height="5.43" fill="rgb(0, 0, 160)"/>
</g></g>
</svg>
<svg width="1166" height="676" style="position:absolute;left:0;top:0">
<g shape-rendering="crispEdges" fill="#fff">
<rect x="843" y="23" width="176" height="2"/><rect x="843" y="163" width="176" height="2"/>
<rect x="843" y="23" width="2" height="142"/><rect x="1017" y="23" width="2" height="142"/>
<rect x="1021" y="23" width="10" height="2"/><rect x="1021" y="163" width="10" height="2"/>
<rect x="1021" y="23" width="2" height="142"/><rect x="1029" y="23" width="2" height="142"/>
<rect x="840" y="163" width="3" height="1"/>
<rect x="841" y="155" width="2" height="1"/>
<rect x="841" y="146" width="2" height="1"/>
<rect x="840" y="137" width="3" height="1"/>
<rect x="841" y="129" width="2" height="1"/>
<rect x="841" y="120" width="2" height="1"/>
<rect x="840" y="111" width="3" height="1"/>
<rect x="841" y="103" width="2" height="1"/>
<rect x="841" y="94" width="2" height="1"/>
<rect x="840" y="85" width="3" height="1"/>
<rect x="841" y="76" width="2" height="1"/>
<rect x="841" y="68" width="2" height="1"/>
<rect x="840" y="59" width="3" height="1"/>
<rect x="841" y="50" width="2" height="1"/>
<rect x="841" y="42" width="2" height="1"/>
<rect x="840" y="33" width="3" height="1"/>
<rect x="843" y="165" width="1" height="4"/>
<rect x="913" y="165" width="1" height="4"/>
<rect x="983" y="165" width="1" height="4"/>
</g>
<defs><linearGradient id="cb" x1="0" y1="0" x2="0" y2="1"><stop offset="0" stop-color="#FF10FF"/><stop offset="0.08" stop-color="#FF0090"/><stop offset="0.18" stop-color="#F80000"/><stop offset="0.26" stop-color="#FF6000"/><stop offset="0.36" stop-color="#FFC000"/><stop offset="0.40" stop-color="#FFFF00"/><stop offset="0.47" stop-color="#B0FF50"/><stop offset="0.53" stop-color="#40FFC0"/><stop offset="0.60" stop-color="#00F0FF"/><stop offset="0.69" stop-color="#0080FF"/><stop offset="0.76" stop-color="#0020FF"/><stop offset="0.83" stop-color="#0000E0"/><stop offset="1" stop-color="#000090"/></linearGradient></defs>
<rect x="1023" y="25" width="6" height="138" fill="url(#cb)"/>
<rect x="879" y="25" width="1" height="138" fill="#F0F060" opacity="0.9"/>
<path d="M875,17 L884,17 L879.5,22 Z" fill="#F0F000"/>
<g font-family='"Liberation Sans", sans-serif' font-size="10" fill="#fff">
<text x="840" y="37.0" text-anchor="end">250</text>
<text x="840" y="50.300000000000004" text-anchor="end">Hz</text>
<text x="840" y="62.9" text-anchor="end">125</text>
<text x="840" y="88.6" text-anchor="end">63</text>
<text x="840" y="114.8" text-anchor="end">31.5</text>
<text x="840" y="140.6" text-anchor="end">16</text>
<text x="840" y="167.0" text-anchor="end">8</text>
<text x="843" y="182" text-anchor="middle">0</text>
<text x="913.8" y="182" text-anchor="middle">100</text>
<text x="947" y="182" text-anchor="middle">ms</text>
<text x="983" y="182" text-anchor="middle">200</text>
<text x="1032.5" y="27.0" font-size="9" letter-spacing="0.4">60</text>
<text x="1032.5" y="42.099999999999994" font-size="9" letter-spacing="0.4">dB</text>
<text x="1032.5" y="55.3" font-size="9" letter-spacing="0.4">50</text>
<text x="1032.5" y="83.5" font-size="9" letter-spacing="0.4">40</text>
<text x="1032.5" y="111.3" font-size="9" letter-spacing="0.4">30</text>
<text x="1032.5" y="139.3" font-size="9" letter-spacing="0.4">20</text>
<text x="1032.5" y="166.8" font-size="9" letter-spacing="0.4">10</text>
</g></svg>
<div class="t" style="left:811px;top:194.8px;font-size:11px;color:#000;">Found Room Modes:</div>
<div class="t" style="left:811px;top:366.3px;font-size:11px;color:#000;">Stimulus EQ:</div>
<div style="position:absolute;left:810px;top:208px;width:243px;height:151px;border:1px solid #7F9DB9;background:#F8F8F8;overflow:hidden">
<div style="position:absolute;left:0;top:0;width:243px;height:20px;background:linear-gradient(#EFEEE3 0px,#EBEADB 15px,#E4E1D2 16px,#D9D5C5 18px,#CDC9B9 20px)"></div>
<div style="position:absolute;left:0;top:0;width:1px;height:153px;background:#FCFCFC"></div>
<div style="position:absolute;left:34px;top:4px;width:1px;height:13px;background:#C7C5B2"></div>
<div style="position:absolute;left:35px;top:4px;width:1px;height:13px;background:#F6F5EE"></div>
<div style="position:absolute;left:82px;top:4px;width:1px;height:13px;background:#C7C5B2"></div>
<div style="position:absolute;left:83px;top:4px;width:1px;height:13px;background:#F6F5EE"></div>
<div style="position:absolute;left:130px;top:4px;width:1px;height:13px;background:#C7C5B2"></div>
<div style="position:absolute;left:131px;top:4px;width:1px;height:13px;background:#F6F5EE"></div>
<div style="position:absolute;left:178px;top:4px;width:1px;height:13px;background:#C7C5B2"></div>
<div style="position:absolute;left:179px;top:4px;width:1px;height:13px;background:#F6F5EE"></div>
<div style="position:absolute;left:1px;top:33px;width:243px;height:1px;background:#E6E6E6"></div>
<div style="position:absolute;left:1px;top:47px;width:243px;height:1px;background:#E6E6E6"></div>
<div style="position:absolute;left:1px;top:61px;width:243px;height:1px;background:#E6E6E6"></div>
<div style="position:absolute;left:1px;top:75px;width:243px;height:1px;background:#E6E6E6"></div>
<div style="position:absolute;left:1px;top:89px;width:243px;height:1px;background:#E6E6E6"></div>
<div style="position:absolute;left:1px;top:103px;width:243px;height:1px;background:#E6E6E6"></div>
<div style="position:absolute;left:1px;top:117px;width:243px;height:1px;background:#E6E6E6"></div>
<div style="position:absolute;left:1px;top:131px;width:243px;height:1px;background:#E6E6E6"></div>
<div style="position:absolute;left:1px;top:145px;width:243px;height:1px;background:#E6E6E6"></div>
<div style="position:absolute;left:35px;top:20px;width:1px;height:153px;background:#E6E6E6"></div>
<div style="position:absolute;left:83px;top:20px;width:1px;height:153px;background:#E6E6E6"></div>
<div style="position:absolute;left:131px;top:20px;width:1px;height:153px;background:#E6E6E6"></div>
<div style="position:absolute;left:179px;top:20px;width:1px;height:153px;background:#E6E6E6"></div>
<div class="t" style="left:11px;top:5.5px;font-size:11px">Use</div>
<div class="t" style="left:45px;top:5.5px;font-size:11px">f [Hz]</div>
<div class="t" style="left:92px;top:5.5px;font-size:11px">Q</div>
<div class="t" style="left:140px;top:5.5px;font-size:11px">G [dB]</div>
<div class="t" style="left:189px;top:5.5px;font-size:11px">Type</div>
</div>
<div style="position:absolute;left:810px;top:380px;width:243px;height:151px;border:1px solid #7F9DB9;background:#F8F8F8;overflow:hidden">
<div style="position:absolute;left:0;top:0;width:243px;height:20px;background:linear-gradient(#EFEEE3 0px,#EBEADB 15px,#E4E1D2 16px,#D9D5C5 18px,#CDC9B9 20px)"></div>
<div style="position:absolute;left:0;top:0;width:1px;height:153px;background:#FCFCFC"></div>
<div style="position:absolute;left:34px;top:4px;width:1px;height:13px;background:#C7C5B2"></div>
<div style="position:absolute;left:35px;top:4px;width:1px;height:13px;background:#F6F5EE"></div>
<div style="position:absolute;left:82px;top:4px;width:1px;height:13px;background:#C7C5B2"></div>
<div style="position:absolute;left:83px;top:4px;width:1px;height:13px;background:#F6F5EE"></div>
<div style="position:absolute;left:130px;top:4px;width:1px;height:13px;background:#C7C5B2"></div>
<div style="position:absolute;left:131px;top:4px;width:1px;height:13px;background:#F6F5EE"></div>
<div style="position:absolute;left:178px;top:4px;width:1px;height:13px;background:#C7C5B2"></div>
<div style="position:absolute;left:179px;top:4px;width:1px;height:13px;background:#F6F5EE"></div>
<div style="position:absolute;left:1px;top:33px;width:243px;height:1px;background:#E6E6E6"></div>
<div style="position:absolute;left:1px;top:47px;width:243px;height:1px;background:#E6E6E6"></div>
<div style="position:absolute;left:1px;top:61px;width:243px;height:1px;background:#E6E6E6"></div>
<div style="position:absolute;left:1px;top:75px;width:243px;height:1px;background:#E6E6E6"></div>
<div style="position:absolute;left:1px;top:89px;width:243px;height:1px;background:#E6E6E6"></div>
<div style="position:absolute;left:1px;top:103px;width:243px;height:1px;background:#E6E6E6"></div>
<div style="position:absolute;left:1px;top:117px;width:243px;height:1px;background:#E6E6E6"></div>
<div style="position:absolute;left:1px;top:131px;width:243px;height:1px;background:#E6E6E6"></div>
<div style="position:absolute;left:1px;top:145px;width:243px;height:1px;background:#E6E6E6"></div>
<div style="position:absolute;left:35px;top:20px;width:1px;height:153px;background:#E6E6E6"></div>
<div style="position:absolute;left:83px;top:20px;width:1px;height:153px;background:#E6E6E6"></div>
<div style="position:absolute;left:131px;top:20px;width:1px;height:153px;background:#E6E6E6"></div>
<div style="position:absolute;left:179px;top:20px;width:1px;height:153px;background:#E6E6E6"></div>
<div class="t" style="left:11px;top:5.5px;font-size:11px">Use</div>
<div class="t" style="left:45px;top:5.5px;font-size:11px">f [Hz]</div>
<div class="t" style="left:92px;top:5.5px;font-size:11px">Q</div>
<div class="t" style="left:140px;top:5.5px;font-size:11px">G [dB]</div>
</div>
<div style="position:absolute;left:811px;top:540px;width:115px;height:19px;border:1px solid #003C74;border-radius:3px;background:linear-gradient(#FFFFFF,#F3F2EC 60%,#D8D5C8);color:#000;font-size:11px;line-height:19px;text-align:center;letter-spacing:-0.25px">Clear Stimulus EQ</div>
<div style="position:absolute;left:934px;top:540px;width:119px;height:19px;border:1px solid #003C74;border-radius:3px;background:linear-gradient(#FFFFFF,#F3F2EC 60%,#D8D5C8);color:#000;font-size:11px;line-height:19px;text-align:center;letter-spacing:-0.25px">Copy Room Modes</div>
<div style="position:absolute;left:1062px;top:20px;width:75px;height:186px;border:1px solid #D0D0BF;border-radius:4px"></div>
<div class="t" style="left:1069px;top:15px;font-size:11px;color:#1F4BB4;background:#E6E8D8;padding:0 2px">Action</div>
<div style="position:absolute;left:1071px;top:35px;width:59px;height:19px;border:1px solid #003C74;border-radius:3px;background:linear-gradient(#FFFFFF,#F3F2EC 60%,#D8D5C8);color:#000;font-size:11px;line-height:19px;text-align:center;letter-spacing:-0.25px">Measure</div>
<div style="position:absolute;left:1070px;top:60px;width:61px;height:8px;border:1px solid #686868;border-radius:3px;background:linear-gradient(#EEEEEE,#FFFFFF)"></div>
<div style="position:absolute;left:1084px;top:93px;width:2px;height:84px;background:#F4F4F0;border-left:1px solid #8D8C89"></div>
<div style="position:absolute;left:1071px;top:97px;width:3px;height:1px;background:#B4B4AA"></div>
<div style="position:absolute;left:1098px;top:97px;width:3px;height:1px;background:#B4B4AA"></div>
<div style="position:absolute;left:1071px;top:110px;width:3px;height:1px;background:#B4B4AA"></div>
<div style="position:absolute;left:1098px;top:110px;width:3px;height:1px;background:#B4B4AA"></div>
<div style="position:absolute;left:1071px;top:122px;width:3px;height:1px;background:#B4B4AA"></div>
<div style="position:absolute;left:1098px;top:122px;width:3px;height:1px;background:#B4B4AA"></div>
<div style="position:absolute;left:1071px;top:135px;width:3px;height:1px;background:#B4B4AA"></div>
<div style="position:absolute;left:1098px;top:135px;width:3px;height:1px;background:#B4B4AA"></div>
<div style="position:absolute;left:1071px;top:147px;width:3px;height:1px;background:#B4B4AA"></div>
<div style="position:absolute;left:1098px;top:147px;width:3px;height:1px;background:#B4B4AA"></div>
<div style="position:absolute;left:1071px;top:160px;width:3px;height:1px;background:#B4B4AA"></div>
<div style="position:absolute;left:1098px;top:160px;width:3px;height:1px;background:#B4B4AA"></div>
<div style="position:absolute;left:1071px;top:173px;width:3px;height:1px;background:#B4B4AA"></div>
<div style="position:absolute;left:1098px;top:173px;width:3px;height:1px;background:#B4B4AA"></div>
<div style="position:absolute;left:1075px;top:117px;width:18px;height:9px;border:1px solid #8E8F8F;border-left:2px solid #2F9F2F;border-right:2px solid #2F9F2F;border-radius:2px;background:linear-gradient(#FFFFFF,#E8E7E0)"></div>
<div style="position:absolute;left:1117px;top:89px;width:10px;height:87px;background:#000;border:1px solid #7A7A7A"></div>
<div class="t" style="left:1108px;top:84.3px;font-size:11px;color:#E00000;font-weight:bold">H</div>
<div class="t" style="left:1107.5px;top:128.8px;font-size:11px;color:#20C020;font-weight:bold">G</div>
<div class="t" style="left:1108px;top:173.8px;font-size:11px;color:#0000C0;font-weight:bold">L</div>
<div class="t" style="left:1070px;top:189.8px;font-size:11px;color:#000;">Output Level</div>
<div style="position:absolute;left:1064px;top:217px;width:11px;height:11px;border:1px solid #1D3D58;background:linear-gradient(135deg,#E0E4E8,#FFFFFF)"></div>
<div class="t" style="left:1081px;top:218.8px;font-size:11px;color:#000;">Result</div>
<div style="position:absolute;left:1064px;top:233px;width:11px;height:11px;border:1px solid #1D3D58;background:linear-gradient(135deg,#E0E4E8,#FFFFFF)"></div>
<div class="t" style="left:1081px;top:234.8px;font-size:11px;color:#000;">Modes+EQ</div>
<div style="position:absolute;left:1064px;top:248px;width:11px;height:11px;border:1px solid #1D3D58;background:linear-gradient(135deg,#E0E4E8,#FFFFFF)"></div>
<svg style="position:absolute;left:1064px;top:248px" width="13" height="13"><path d="M3.2,5.8 L5.6,8.6 L9.6,3.8" fill="none" stroke="#2E8B2E" stroke-width="2.2"/></svg>
<div class="t" style="left:1081px;top:249.8px;font-size:11px;color:#000;">Measured</div>
<div class="t" style="left:1063px;top:269.8px;font-size:11px;color:#000;">Result smooth:</div>
<div class="t" style="left:1063px;top:309.3px;font-size:11px;color:#000;">Modes smooth:</div>
<div class="t" style="left:1064px;top:347.8px;font-size:11px;color:#000;">Meas. smooth:</div>
<div style="position:absolute;left:1064px;top:284px;width:73px;height:19px;border:1px solid #7D8C9C;background:#fff"></div>
<div style="position:absolute;left:1122px;top:286px;width:15px;height:17px;background:linear-gradient(#CCD8FA,#B6C7F4);border-radius:2px"></div>
<svg style="position:absolute;left:1122px;top:286px" width="15" height="17"><path d="M3.5,6.0 L7.5,10.0 L11.5,6.0" fill="none" stroke="#2E3C5C" stroke-width="2.2"/></svg>
<div class="t" style="left:1071px;top:289.8px;font-size:11px;color:#000;">3 ppo</div>
<div style="position:absolute;left:1065px;top:323px;width:72px;height:19px;border:1px solid #7D8C9C;background:#fff"></div>
<div style="position:absolute;left:1122px;top:325px;width:15px;height:17px;background:linear-gradient(#CCD8FA,#B6C7F4);border-radius:2px"></div>
<svg style="position:absolute;left:1122px;top:325px" width="15" height="17"><path d="M3.5,6.0 L7.5,10.0 L11.5,6.0" fill="none" stroke="#2E3C5C" stroke-width="2.2"/></svg>
<div class="t" style="left:1072px;top:328.8px;font-size:11px;color:#000;">2 ppo</div>
<div style="position:absolute;left:1065px;top:362px;width:72px;height:19px;border:1px solid #7D8C9C;background:#fff"></div>
<div style="position:absolute;left:1122px;top:364px;width:15px;height:17px;background:linear-gradient(#CCD8FA,#B6C7F4);border-radius:2px"></div>
<svg style="position:absolute;left:1122px;top:364px" width="15" height="17"><path d="M3.5,6.0 L7.5,10.0 L11.5,6.0" fill="none" stroke="#2E3C5C" stroke-width="2.2"/></svg>
<div class="t" style="left:1072px;top:367.8px;font-size:11px;color:#000;">3 ppo</div>
<div class="t" style="left:1060px;top:399.8px;font-size:11px;color:#000;">t (ms)</div>
<div style="position:absolute;left:1088px;top:395px;width:49px;height:21px;border:1px solid #7D8C9C;background:#E6E8D8"></div>
<div class="t" style="left:1091.5px;top:400.8px;font-size:11px;color:#000;letter-spacing:0.3px">50.0</div>
<div style="position:absolute;left:1121px;top:397px;width:15px;height:8px;background:linear-gradient(#C6D5FA,#B0C4F5);border-radius:1px"></div>
<div style="position:absolute;left:1121px;top:406px;width:15px;height:9px;background:linear-gradient(#C6D5FA,#B0C4F5);border-radius:1px"></div>
<svg style="position:absolute;left:1121px;top:397px" width="15" height="18"><path d="M4.5,5.5 L7.5,2.5 L10.5,5.5 M4.5,11.5 L7.5,14.5 L10.5,11.5" fill="none" stroke="#2E3C5C" stroke-width="2"/></svg>
<div style="position:absolute;left:1062px;top:454px;width:75px;height:107px;border:1px solid #D0D0BF;border-radius:4px"></div>
<div class="t" style="left:1069px;top:449px;font-size:11px;color:#1F4BB4;background:#E6E8D8;padding:0 2px">Overlay</div>
<div style="position:absolute;left:1068px;top:467px;width:16px;height:16px;border:1px solid #003C74;border-radius:3px;background:linear-gradient(#FFFFFF,#F3F2EC 60%,#D8D5C8);color:#000;font-size:12px;line-height:16px;text-align:center;letter-spacing:-0.25px">1</div>
<div style="position:absolute;left:1090px;top:467px;width:41px;height:16px;border:1px solid #C9C7BA;border-radius:3px;background:#F5F4EA;color:#ACA899;font-size:11px;line-height:16px;text-align:center;letter-spacing:-0.25px">Show 1</div>
<div style="position:absolute;left:1068px;top:491px;width:16px;height:16px;border:1px solid #003C74;border-radius:3px;background:linear-gradient(#FFFFFF,#F3F2EC 60%,#D8D5C8);color:#000;font-size:12px;line-height:16px;text-align:center;letter-spacing:-0.25px">2</div>
<div style="position:absolute;left:1090px;top:491px;width:41px;height:16px;border:1px solid #C9C7BA;border-radius:3px;background:#F5F4EA;color:#ACA899;font-size:11px;line-height:16px;text-align:center;letter-spacing:-0.25px">Show 2</div>
<div style="position:absolute;left:1068px;top:514px;width:16px;height:16px;border:1px solid #003C74;border-radius:3px;background:linear-gradient(#FFFFFF,#F3F2EC 60%,#D8D5C8);color:#000;font-size:12px;line-height:16px;text-align:center;letter-spacing:-0.25px">3</div>
<div style="position:absolute;left:1090px;top:514px;width:41px;height:16px;border:1px solid #C9C7BA;border-radius:3px;background:#F5F4EA;color:#ACA899;font-size:11px;line-height:16px;text-align:center;letter-spacing:-0.25px">Show 3</div>
<div style="position:absolute;left:1068px;top:536px;width:16px;height:16px;border:1px solid #003C74;border-radius:3px;background:linear-gradient(#FFFFFF,#F3F2EC 60%,#D8D5C8);color:#000;font-size:12px;line-height:16px;text-align:center;letter-spacing:-0.25px">4</div>
<div style="position:absolute;left:1090px;top:536px;width:41px;height:16px;border:1px solid #C9C7BA;border-radius:3px;background:#F5F4EA;color:#ACA899;font-size:11px;line-height:16px;text-align:center;letter-spacing:-0.25px">Show 4</div>
</body></html>
